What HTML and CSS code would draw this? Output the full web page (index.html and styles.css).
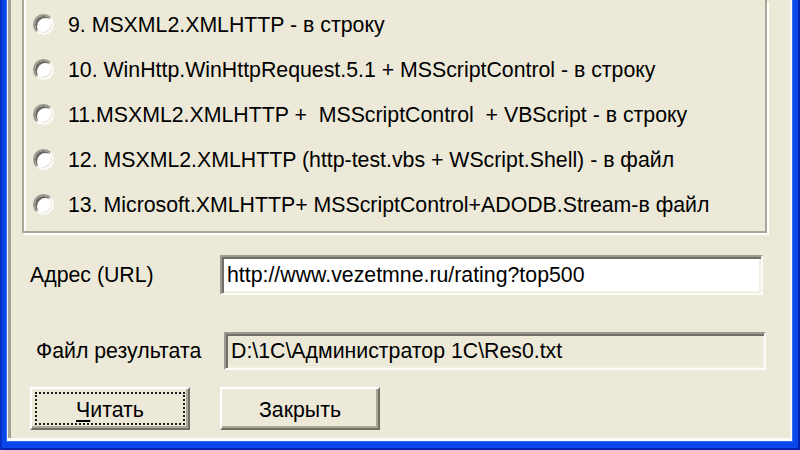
FILE: index.html
```html
<!DOCTYPE html>
<html lang="ru">
<head>
<meta charset="utf-8">
<title>Чтение URL</title>
<link rel="stylesheet" href="styles.css">
</head>
<body>
<div class="window">
  <div class="client">
    <div class="group">
      <div class="opt"><span class="radio"></span><span class="cap">9. MSXML2.XMLHTTP - в строку</span></div>
      <div class="opt"><span class="radio"></span><span class="cap">10. WinHttp.WinHttpRequest.5.1 + MSScriptControl - в строку</span></div>
      <div class="opt"><span class="radio"></span><span class="cap">11.MSXML2.XMLHTTP +  MSScriptControl  + VBScript - в строку</span></div>
      <div class="opt"><span class="radio"></span><span class="cap">12. MSXML2.XMLHTTP (http-test.vbs + WScript.Shell) - в файл</span></div>
      <div class="opt"><span class="radio"></span><span class="cap">13. Microsoft.XMLHTTP+ MSScriptControl+ADODB.Stream-в файл</span></div>
    </div>
    <div class="field f-url">
      <span class="lbl">Адрес (URL)</span>
      <div class="edit">http://www.vezetmne.ru/rating?top500</div>
    </div>
    <div class="field f-file">
      <span class="lbl">Файл результата</span>
      <div class="edit ro">D:\1C\Администратор 1C\Res0.txt</div>
    </div>
    <div class="buttons">
      <button class="btn focus" type="button"><u>Ч</u>итать</button>
      <button class="btn" type="button">Закрыть</button>
    </div>
  </div>
</div>
</body>
</html>
```
FILE: styles.css
```css
html, body {
  margin: 0;
  width: 800px;
  height: 450px;
  overflow: hidden;
  background: #0b47ea;
}
body {
  font-family: "Liberation Sans", Arial, sans-serif;
  font-size: 21.3px;
  color: #000;
}
.window {
  box-sizing: border-box;
  width: 800px;
  height: 450px;
  padding: 0 8px 9px 7px;
  background: #0b47ea;
  box-shadow: inset 2px 0 0 #0030c8, inset -2px 0 0 #0024b0, inset 0 -2px 0 #0024b0;
  display: flex;
}
.client {
  flex: 1;
  background: #ece9d8;
  box-shadow: 0 0 0 1px #2d6ff3, inset 0 -3px 0 #fbfbf8, inset 1px 0 0 #f2f4fa, inset 4px 0 0 #a5a398, inset -2px 0 0 #f7f6f0;
  padding-left: 15px;
  display: flex;
  flex-direction: column;
}
.group {
  box-sizing: border-box;
  width: 745px;
  height: 233px;
  border: 2px solid #aca899;
  border-top: none;
  box-shadow: inset 2px 0 0 #fff, 2px 2px 0 #fff;
  padding-top: 2px;
  padding-bottom: 4px;
}
.opt {
  height: 45px;
  display: flex;
  align-items: center;
  padding-left: 9px;
  white-space: pre;
}
.cap {
  padding-top: 2px;
}
.radio {
  box-sizing: border-box;
  flex: none;
  width: 21px;
  height: 21px;
  border-radius: 50%;
  background: #fff;
  border: 2px solid;
  border-color: #9a988e #fafaf7 #fafaf7 #9a988e;
  box-shadow: inset 2px 2px 0 #6a6860, inset -1px -1px 0 #e6e4da;
  margin-right: 14px;
}
.field {
  display: flex;
  align-items: center;
  white-space: pre;
}
.f-url {
  margin-top: 22px;
  height: 40px;
}
.f-url .lbl {
  margin-left: 8px;
  width: 190px;
}
.f-url .edit {
  width: 543px;
  height: 40px;
}
.f-file {
  margin-top: 37px;
  height: 38px;
}
.f-file .lbl {
  margin-left: 14px;
  width: 188px;
}
.f-file .edit {
  width: 542px;
  height: 38px;
}
.edit {
  box-sizing: border-box;
  background: #fff;
  border: 2px solid;
  border-color: #9d9b91 #fbfbf8 #fbfbf8 #9d9b91;
  box-shadow: inset 2px 2px 0 #716f64, inset -2px -2px 0 #f1efe2;
  padding-left: 5px;
  padding-top: 1px;
  display: flex;
  align-items: center;
}
.edit.ro {
  background: #ece9d8;
}
.buttons {
  margin-top: 17px;
  margin-left: 8px;
  display: flex;
  gap: 30px;
}
.btn {
  box-sizing: border-box;
  width: 160px;
  height: 43px;
  padding: 4px 0 0;
  font: inherit;
  color: #000;
  background: #ece9d8;
  border: 2px solid;
  border-color: #fff #716f64 #716f64 #fff;
  box-shadow: inset -2px -2px 0 #aca899;
}
.btn.focus {
  outline: 2px dotted #1a1a1a;
  outline-offset: -7px;
}
.btn u {
  text-decoration-thickness: 2px;
  text-underline-offset: 3px;
}
```
